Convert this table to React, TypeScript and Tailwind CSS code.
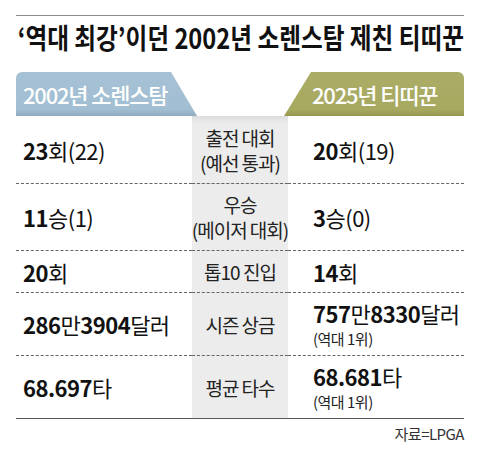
const rows = [
  {
    h: "h-[68px]",
    left: { num: "23", unit: "회(22)" },
    label: ["출전 대회", "(예선 통과)"],
    right: { num: "20", unit: "회(19)" },
    first: true,
  },
  {
    h: "h-[67px]",
    left: { num: "11", unit: "승(1)" },
    label: ["우승", "(메이저 대회)"],
    right: { num: "3", unit: "승(0)" },
  },
  {
    h: "h-[42px]",
    left: { num: "20", unit: "회" },
    label: ["톱10 진입"],
    right: { num: "14", unit: "회" },
  },
  {
    h: "h-[63px]",
    left: { parts: ["286", "만", "3904", "달러"] },
    label: ["시즌 상금"],
    right: { parts: ["757", "만", "8330", "달러"], note: "(역대 1위)" },
  },
  {
    h: "h-[63px]",
    left: { num: "68.697", unit: "타" },
    label: ["평균 타수"],
    right: { num: "68.681", unit: "타" },
    rightNote: "(역대 1위)",
    last: true,
  },
];

type Val = { num?: string; unit?: string; parts?: string[]; note?: string };

const Value = ({ v, note }: { v: Val; note?: string }) => {
  const parts = v.parts ?? [v.num ?? "", v.unit ?? ""];
  return (
    <div className="flex flex-col">
      <div className="text-[22px] leading-[24px] tracking-[-0.5px] text-[#111] whitespace-nowrap">
        {parts.map((p, i) =>
          i % 2 === 0 ? (
            <span key={i} className="font-bold">
              {p}
            </span>
          ) : (
            <span key={i} className="font-normal">
              {p}
            </span>
          )
        )}
      </div>
      {(note ?? v.note) && (
        <div className="text-[15px] leading-[18px] tracking-[-0.5px] text-[#222] mt-[5px]">
          {note ?? v.note}
        </div>
      )}
    </div>
  );
};

const App = () => {
  return (
    <div className="w-[480px] h-[458px] bg-white px-4 pt-[15px] font-['Noto_Sans_CJK_KR',sans-serif]">
      <div className="h-px bg-[#8c8c8c]" />
      <h1 className="mt-[6px] text-[28px] leading-[30px] font-bold text-[#111] whitespace-nowrap origin-left scale-x-[0.845] pl-[2px]">
        ‘역대 최강’이던 2002년 소렌스탐 제친 티띠꾼
      </h1>

      <div className="mt-[20px] flex justify-between h-[44px]">
        <div className="w-[181px] h-full rounded-tl-[6px] [clip-path:polygon(0_0,155px_0,181px_100%,0_100%)] bg-[linear-gradient(to_bottom,#a6c1d5_0%,#a2bed2_85%,#8eaac0_100%)] flex items-center pl-[7px]">
          <span className="text-white text-[22px] font-medium tracking-[-1.2px] leading-none">
            2002년 소렌스탐
          </span>
        </div>
        <div className="w-[180px] h-full rounded-tr-[6px] [clip-path:polygon(27px_0,100%_0,100%_100%,0_100%)] bg-[linear-gradient(to_bottom,#abad66_0%,#a7a961_85%,#96984f_100%)] flex items-center pl-[28px]">
          <span className="text-white text-[22px] font-medium tracking-[-1.2px] leading-none">
            2025년 티띠꾼
          </span>
        </div>
      </div>

      <div className="flex flex-col">
        {rows.map((r, i) => (
          <div key={i} className={`grid grid-cols-[176px_96px_176px] ${r.h}`}>
            <div
              className={`flex items-center pl-[7px] border-b ${
                r.last ? "border-solid border-[#555]" : "border-dashed border-[#666]"
              }`}
            >
              <Value v={r.left} />
            </div>
            <div
              className={`flex flex-col items-center justify-center gap-[2px] border-b ${
                r.last ? "border-solid border-[#555]" : "border-dashed border-[#666]"
              } ${
                r.first
                  ? "bg-[linear-gradient(to_bottom,#dcdcdc_0px,#ececec_7px)]"
                  : "bg-[#ececec]"
              }`}
            >
              {r.label.map((t) => (
                <div
                  key={t}
                  className="text-[19px] leading-[23px] tracking-[-1px] text-[#222] whitespace-nowrap"
                >
                  {t}
                </div>
              ))}
            </div>
            <div
              className={`flex items-center pl-[25px] border-b ${
                r.last ? "border-solid border-[#555]" : "border-dashed border-[#666]"
              }`}
            >
              <Value v={r.right} note={r.rightNote} />
            </div>
          </div>
        ))}
      </div>

      <div className="mt-[5px] text-right text-[15px] leading-[20px] tracking-[-0.5px] text-[#333]">
        자료=LPGA
      </div>
    </div>
  );
};

export default App;
